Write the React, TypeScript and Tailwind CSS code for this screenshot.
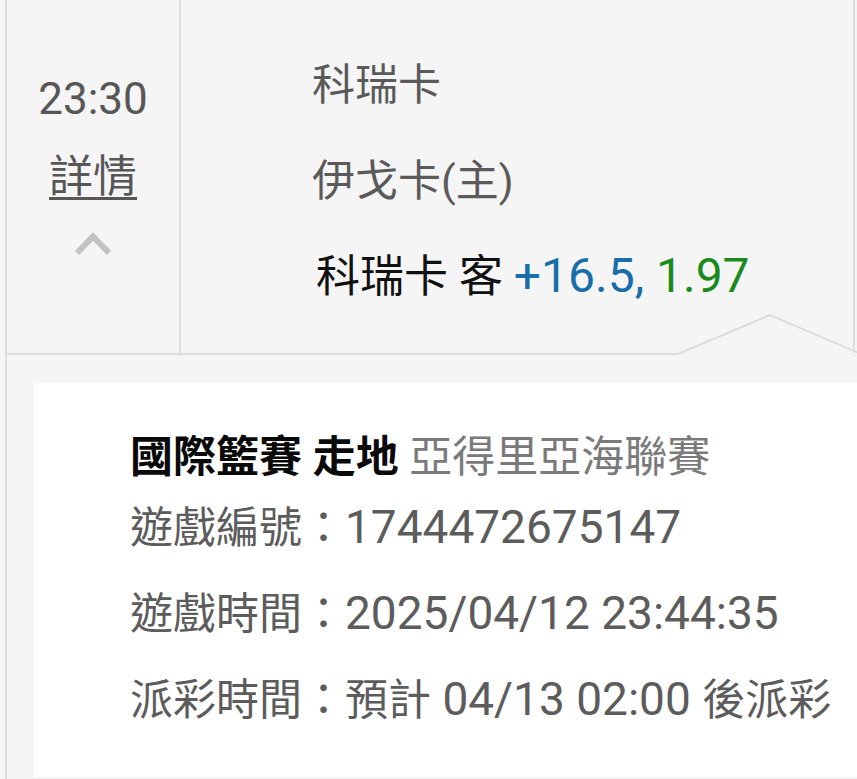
const font = { fontFamily: "Roboto, 'Noto Sans CJK TC', sans-serif" };

function ChevronUp() {
  return (
    <svg width="38" height="24" viewBox="0 0 38 24" fill="none">
      <polyline points="3,21 19,4.5 35,21" stroke="#c2c2c2" strokeWidth="6" />
    </svg>
  );
}

// latin runs render a touch larger than the CJK glyphs in the reference
const Num = ({ children }: { children: React.ReactNode }) => (
  <span className="text-[46px]">{children}</span>
);

const rows = [
  { label: "遊戲編號", value: <Num>1744472675147</Num> },
  { label: "遊戲時間", value: <Num>2025/04/12 23:44:35</Num> },
  {
    label: "派彩時間",
    value: (
      <>
        預計<Num> 04/13 02:00 </Num>後派彩
      </>
    ),
  },
];

export default function App() {
  return (
    <div
      className="w-[857px] h-[779px] bg-[#f5f5f5] overflow-hidden text-[43px]"
      style={font}
    >
      <div className="ml-[5px] h-full border-l-2 border-[#dedede]">
        {/* bet row */}
        <div className="relative flex h-[356px]">
          <div className="w-[174px] border-r-2 border-[#dedede] flex flex-col items-center pt-[72px] text-[44px]">
            <div className="leading-[54px] text-[#575757]">23:30</div>
            <div className="mt-[24px] leading-[54px] text-[#575757] underline decoration-[3px] underline-offset-[5px]">
              詳情
            </div>
            <div className="mt-[28px]">
              <ChevronUp />
            </div>
          </div>
          <div className="flex-1 mr-[2px] border-r-2 border-[#dedede] pt-[58px]">
            <div className="pl-[131px] leading-[54px] text-[#5a5a5a]">科瑞卡</div>
            <div className="pl-[131px] mt-[42px] leading-[54px] text-[#5a5a5a]">伊戈卡(主)</div>
            <div className="pl-[135px] mt-[41px] leading-[54px] text-[44px] text-[#111] whitespace-nowrap">
              科瑞卡 客 <span className="text-[48px] text-[#176ea8]">+16.5,</span>
              <span className="text-[48px]"> </span>
              <span className="text-[48px] text-[#1a8a1c]">1.97</span>
            </div>
          </div>
          {/* bottom edge with notch */}
          <svg
            className="absolute left-0 bottom-0"
            width="852"
            height="44"
            viewBox="0 0 852 44"
          >
            <polygon points="671,43 763,4 852,43" fill="#f5f5f5" />
            <polyline
              points="0,42 671,42 763,3 854,42"
              stroke="#dcdcdc"
              strokeWidth="2"
              fill="none"
            />
          </svg>
        </div>

        {/* detail card */}
        <div className="pl-[27px] pt-[27px]">
          <div className="h-[394px] bg-white pl-[96px] pt-[47px]">
            <div className="leading-[54px] whitespace-nowrap">
              <span className="font-bold text-[#0a0a0a]">國際籃賽 走地</span>{" "}
              <span className="text-[#7a7a7a]">亞得里亞海聯賽</span>
            </div>
            {rows.map((r, i) => (
              <div
                key={r.label}
                className={`leading-[54px] whitespace-nowrap text-[#5c5c5c] ${i === 0 ? "mt-[16px]" : "mt-[31px]"}`}
              >
                {r.label}：{r.value}
              </div>
            ))}
          </div>
        </div>
      </div>
    </div>
  );
}
